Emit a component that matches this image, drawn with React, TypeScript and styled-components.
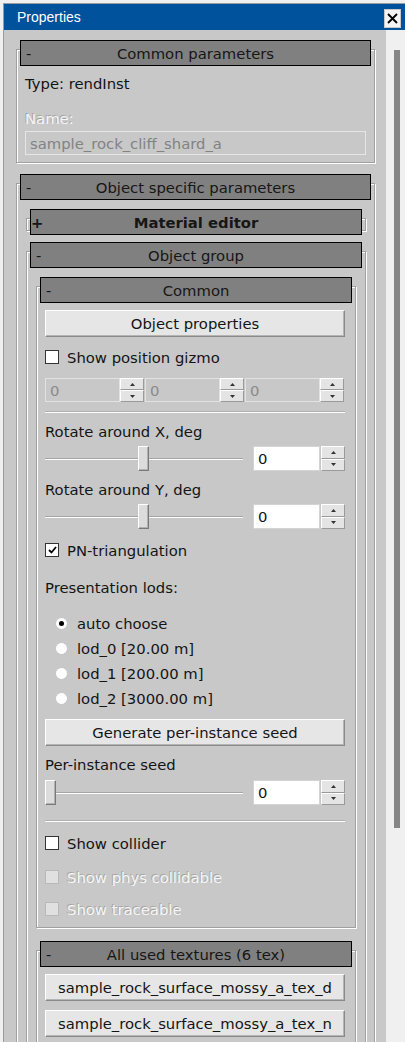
import React from 'react';
import styled, { createGlobalStyle } from 'styled-components';

const GlobalStyle = createGlobalStyle`
  html, body { margin: 0; padding: 0; }
  body {
    background: #f0f0f0;
    font-family: "DejaVu Sans", Verdana, sans-serif;
    font-size: 14.8px;
    color: #141414;
  }
  * { box-sizing: border-box; }
`;

const Window = styled.div`
  width: 405px;
  height: 1042px;
  overflow: hidden;
  padding: 3px 0 0 3px;
  background: #f0f0f0;
`;

const WindowFrame = styled.div`
  height: 100%;
  border-left: 1px solid #9a9a9a;
  border-top: 1px solid #9a9a9a;
  display: flex;
  flex-direction: column;
`;

const TitleBar = styled.div`
  height: 26px;
  flex: none;
  background: #00529c;
  display: flex;
  align-items: center;
  padding: 0 4px 0 13px;
  color: #ffffff;
  font-family: "Liberation Sans", Arial, sans-serif;
  font-size: 14px;
`;

const Title = styled.div`
  flex: 1;
  padding-bottom: 1px;
`;

const CloseButton = styled.div`
  width: 17px;
  height: 19px;
  margin-top: 3px;
  background: #f4f4f4;
  border: 1px solid #c8c8c8;
  display: flex;
  align-items: center;
  justify-content: center;
`;

const Body = styled.div`
  flex: 1;
  min-height: 0;
  display: flex;
`;

const Content = styled.div`
  flex: 1;
  background: #c8c8c8;
  padding: 19px 11px 0 12px;
  display: flex;
  flex-direction: column;
  overflow: hidden;
`;

const ScrollTrack = styled.div`
  width: 19px;
  flex: none;
  background: #f0f0f0;
  padding: 20px 5px 0 8px;
`;

const ScrollThumb = styled.div`
  width: 6px;
  height: 778px;
  background: #868686;
`;

const GroupFrame = styled.div<{ $mt: number }>`
  margin-top: ${(p) => p.$mt}px;
  border: 1px solid #a0a0a0;
  box-shadow: inset 1px 1px 0 #ffffff, 1px 1px 0 #ffffff;
  display: flex;
  flex-direction: column;
  flex: none;
`;

const GroupHeader = styled.div<{ $collapsed?: boolean }>`
  margin: -10px 3px ${(p) => (p.$collapsed ? '-5px' : '0')};
  height: 26px;
  flex: none;
  border: 1px solid #000000;
  background: #808080;
  display: grid;
  grid-template-columns: 24px 1fr 24px;
  align-items: center;
  padding-top: 1px;
  font-weight: ${(p) => (p.$collapsed ? 700 : 400)};
  color: #161616;
  line-height: 17px;
`;

const HeaderSign = styled.span<{ $collapsed?: boolean }>`
  padding-left: ${(p) => (p.$collapsed ? 0 : 5)}px;
`;

const HeaderTitle = styled.span`
  text-align: center;
  white-space: nowrap;
`;

const GroupBody = styled.div<{ $pl: number; $pr: number; $pb: number }>`
  display: flex;
  flex-direction: column;
  padding: 0 ${(p) => p.$pr}px ${(p) => p.$pb}px ${(p) => p.$pl}px;
`;

const Label = styled.div<{ $mt: number; $disabled?: boolean }>`
  margin-top: ${(p) => p.$mt}px;
  line-height: 17px;
  height: 17px;
  white-space: nowrap;
  color: ${(p) => (p.$disabled ? '#f6f6f6' : '#141414')};
  text-shadow: ${(p) => (p.$disabled ? '-1px -1px 0 #a6a6a6' : 'none')};
`;

const DisabledField = styled.div<{ $mt: number }>`
  margin-top: ${(p) => p.$mt}px;
  height: 24px;
  border: 1px solid #e6e6e6;
  color: #828282;
  padding: 0 4px;
  display: flex;
  align-items: center;
  white-space: nowrap;
`;

const PushButton = styled.button<{ $mt: number }>`
  margin-top: ${(p) => p.$mt}px;
  height: 27px;
  width: 100%;
  flex: none;
  font-family: inherit;
  font-size: inherit;
  color: #141414;
  background: #e6e6e6;
  border: 1px solid;
  border-color: #ffffff #8a8a8a #8a8a8a #ffffff;
  box-shadow: inset -1px -1px 0 #b4b4b4;
  padding: 0;
  white-space: nowrap;
`;

const CheckRow = styled.div<{ $mt: number }>`
  margin-top: ${(p) => p.$mt}px;
  height: 14px;
  display: flex;
  align-items: center;
  gap: 8px;
`;

const CheckBox = styled.span<{ $disabled?: boolean }>`
  width: 14px;
  height: 14px;
  flex: none;
  background: ${(p) => (p.$disabled ? '#e0e0e0' : '#ffffff')};
  border: 1px solid ${(p) => (p.$disabled ? '#b8b8b8' : '#333333')};
  display: flex;
  align-items: center;
  justify-content: center;
`;

const CheckText = styled.span<{ $disabled?: boolean }>`
  line-height: 17px;
  white-space: nowrap;
  color: ${(p) => (p.$disabled ? '#f6f6f6' : '#141414')};
  text-shadow: ${(p) => (p.$disabled ? '-1px -1px 0 #a6a6a6' : 'none')};
`;

const SpinRow = styled.div<{ $mt: number }>`
  margin-top: ${(p) => p.$mt}px;
  display: flex;
  height: 24px;
`;

const SpinGroup = styled.div`
  width: 100px;
  display: flex;
  flex: none;
`;

const SpinField = styled.div<{ $enabled?: boolean; $w: number }>`
  width: ${(p) => p.$w}px;
  height: 100%;
  flex: none;
  background: ${(p) => (p.$enabled ? '#ffffff' : 'transparent')};
  border: 1px solid ${(p) => (p.$enabled ? '#d4d4d4' : '#e2e2e2')};
  color: ${(p) => (p.$enabled ? '#141414' : '#8a8a8a')};
  display: flex;
  align-items: center;
  padding-left: 4px;
`;

const Spinner = styled.div<{ $ml?: number }>`
  width: 24px;
  height: 100%;
  flex: none;
  margin-left: ${(p) => p.$ml ?? 0}px;
  display: flex;
  flex-direction: column;
`;

const SpinButton = styled.div`
  flex: 1;
  background: #e4e4e4;
  border: 1px solid;
  border-color: #ffffff #9a9a9a #9a9a9a #ffffff;
  display: flex;
  align-items: center;
  justify-content: center;
`;

const Separator = styled.div<{ $mt: number }>`
  margin-top: ${(p) => p.$mt}px;
  height: 2px;
  flex: none;
  border-top: 1px solid #b0b0b0;
  border-bottom: 1px solid #ffffff;
`;

const SliderRow = styled.div<{ $mt: number }>`
  margin-top: ${(p) => p.$mt}px;
  height: 25px;
  display: flex;
  align-items: center;
`;

const SliderTrack = styled.div`
  width: 198px;
  height: 25px;
  flex: none;
  margin-right: 10px;
  display: flex;
  background:
    linear-gradient(#a4a4a4, #a4a4a4) 0 12px / 100% 1px no-repeat,
    linear-gradient(#ffffff, #ffffff) 0 13px / 100% 1px no-repeat;
`;

const SliderThumb = styled.div<{ $offset: number }>`
  margin-left: ${(p) => p.$offset}px;
  width: 11px;
  height: 25px;
  background: #dcdcdc;
  border: 1px solid;
  border-color: #ffffff #7a7a7a #7a7a7a #ffffff;
  box-shadow: inset -1px -1px 0 #b0b0b0;
`;

const RadioList = styled.div<{ $mt: number }>`
  margin-top: ${(p) => p.$mt}px;
  display: flex;
  flex-direction: column;
  padding-left: 10px;
`;

const RadioRow = styled.div`
  height: 25px;
  display: flex;
  align-items: center;
  gap: 9px;
`;

const RadioCircle = styled.span<{ $checked?: boolean }>`
  width: 13px;
  height: 13px;
  flex: none;
  border-radius: 50%;
  background: #ffffff;
  border: 1px solid #c4c4c4;
  display: flex;
  align-items: center;
  justify-content: center;
  &::after {
    content: '';
    width: 5px;
    height: 5px;
    border-radius: 50%;
    background: ${(p) => (p.$checked ? '#000000' : 'transparent')};
  }
`;

const RadioText = styled.span`
  line-height: 17px;
  white-space: nowrap;
`;

const ArrowUp = () => (
  <svg width="5" height="3" viewBox="0 0 5 3">
    <path d="M2.5 0 L5 3 L0 3 Z" fill="#333" />
  </svg>
);
const ArrowDown = () => (
  <svg width="5" height="3" viewBox="0 0 5 3">
    <path d="M0 0 L5 0 L2.5 3 Z" fill="#333" />
  </svg>
);

const SpinButtons: React.FC<{ ml?: number }> = ({ ml }) => (
  <Spinner $ml={ml}>
    <SpinButton>
      <ArrowUp />
    </SpinButton>
    <SpinButton>
      <ArrowDown />
    </SpinButton>
  </Spinner>
);

const Check: React.FC<{ mt: number; label: string; checked?: boolean; disabled?: boolean }> = ({
  mt,
  label,
  checked,
  disabled,
}) => (
  <CheckRow $mt={mt}>
    <CheckBox $disabled={disabled}>
      {checked && (
        <svg width="9" height="8" viewBox="0 0 9 8">
          <path d="M1 4 L3.5 6.5 L8 1" stroke="#000" strokeWidth="1.8" fill="none" />
        </svg>
      )}
    </CheckBox>
    <CheckText $disabled={disabled}>{label}</CheckText>
  </CheckRow>
);

const ValueSlider: React.FC<{ mt: number; offset: number }> = ({ mt, offset }) => (
  <SliderRow $mt={mt}>
    <SliderTrack>
      <SliderThumb $offset={offset} />
    </SliderTrack>
    <SpinField $enabled $w={67} style={{ height: 25 }}>
      0
    </SpinField>
    <SpinButtons ml={1} />
  </SliderRow>
);

const Header: React.FC<{ title: string; collapsed?: boolean }> = ({ title, collapsed }) => (
  <GroupHeader $collapsed={collapsed}>
    <HeaderSign $collapsed={collapsed}>{collapsed ? '+' : '-'}</HeaderSign>
    <HeaderTitle>{title}</HeaderTitle>
    <span />
  </GroupHeader>
);

export default function App() {
  return (
    <>
      <GlobalStyle />
      <Window>
        <WindowFrame>
          <TitleBar>
            <Title>Properties</Title>
            <CloseButton>
              <svg width="11" height="11" viewBox="0 0 11 11">
                <path d="M1 1 L10 10 M10 1 L1 10" stroke="#000" strokeWidth="1.8" />
              </svg>
            </CloseButton>
          </TitleBar>
          <Body>
            <Content>
              <GroupFrame $mt={0}>
                <Header title="Common parameters" />
                <GroupBody $pl={8} $pr={8} $pb={7}>
                  <Label $mt={9}>Type: rendInst</Label>
                  <Label $mt={18} $disabled>
                    Name:
                  </Label>
                  <DisabledField $mt={4}>sample_rock_cliff_shard_a</DisabledField>
                </GroupBody>
              </GroupFrame>

              <GroupFrame $mt={20}>
                <Header title="Object specific parameters" />
                <GroupBody $pl={9} $pr={8} $pb={10}>
                  <GroupFrame $mt={18}>
                    <Header title="Material editor" collapsed />
                  </GroupFrame>

                  <GroupFrame $mt={20}>
                    <Header title="Object group" />
                    <GroupBody $pl={9} $pr={9} $pb={10}>
                      <GroupFrame $mt={18}>
                        <Header title="Common" />
                        <GroupBody $pl={8} $pr={10} $pb={11}>
                          <PushButton $mt={7}>Object properties</PushButton>
                          <Check mt={13} label="Show position gizmo" />
                          <SpinRow $mt={14}>
                            {[0, 1, 2].map((i) => (
                              <SpinGroup key={i}>
                                <SpinField $w={75}>0</SpinField>
                                <SpinButtons ml={0} />
                              </SpinGroup>
                            ))}
                          </SpinRow>
                          <Separator $mt={9} />
                          <Label $mt={10}>Rotate around X, deg</Label>
                          <ValueSlider mt={6} offset={93} />
                          <Label $mt={10}>Rotate around Y, deg</Label>
                          <ValueSlider mt={6} offset={93} />
                          <Check mt={14} label="PN-triangulation" checked />
                          <Label $mt={22}>Presentation lods:</Label>
                          <RadioList $mt={15}>
                            {['auto choose', 'lod_0 [20.00 m]', 'lod_1 [200.00 m]', 'lod_2 [3000.00 m]'].map(
                              (t, i) => (
                                <RadioRow key={t}>
                                  <RadioCircle $checked={i === 0} />
                                  <RadioText>{t}</RadioText>
                                </RadioRow>
                              )
                            )}
                          </RadioList>
                          <PushButton $mt={8}>Generate per-instance seed</PushButton>
                          <Label $mt={10}>Per-instance seed</Label>
                          <ValueSlider mt={7} offset={0} />
                          <Separator $mt={15} />
                          <Check mt={14} label="Show collider" />
                          <Check mt={20} label="Show phys collidable" disabled />
                          <Check mt={18} label="Show traceable" disabled />
                        </GroupBody>
                      </GroupFrame>

                      <GroupFrame $mt={22}>
                        <Header title="All used textures (6 tex)" />
                        <GroupBody $pl={8} $pr={10} $pb={10}>
                          <PushButton $mt={7}>sample_rock_surface_mossy_a_tex_d</PushButton>
                          <PushButton $mt={9}>sample_rock_surface_mossy_a_tex_n</PushButton>
                        </GroupBody>
                      </GroupFrame>
                    </GroupBody>
                  </GroupFrame>
                </GroupBody>
              </GroupFrame>
            </Content>
            <ScrollTrack>
              <ScrollThumb />
            </ScrollTrack>
          </Body>
        </WindowFrame>
      </Window>
    </>
  );
}
